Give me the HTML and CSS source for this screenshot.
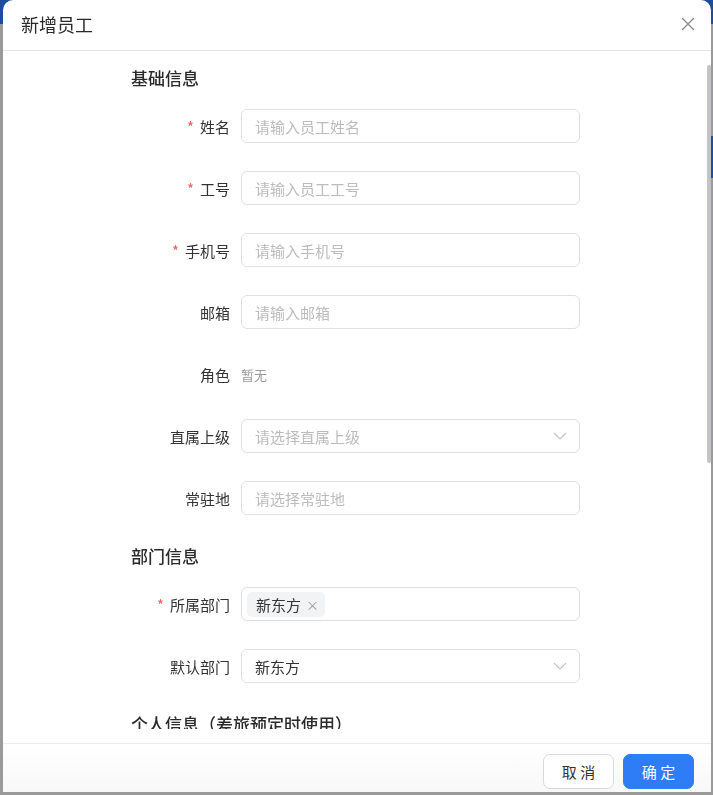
FILE: index.html
```html
<!DOCTYPE html>
<html lang="zh-CN">
<head>
    <meta charset="UTF-8">
    <title>新增员工</title>
    <meta name="viewport" content="width=device-width, initial-scale=1.0">
    <link rel="stylesheet" href="styles.css">
</head>
<body>
    <div class="page">
        <div class="page-bar"></div>
        <div class="page-tab"></div>
    </div>

    <div class="modal">
        <div class="modal-header">
            <span class="modal-title">新增员工</span>
            <button class="modal-close" aria-label="关闭">
                <svg width="14" height="14" viewBox="0 0 14 14">
                    <path d="M1 1L13 13M13 1L1 13" stroke="#8a8a8a" stroke-width="1.3" fill="none"/>
                </svg>
            </button>
        </div>

        <div class="modal-body">
            <div class="scroll">
                <div class="form">
                    <div class="section-title">基础信息</div>
                    <div class="form-row">
                        <label class="form-label required">姓名</label>
                        <input class="input" placeholder="请输入员工姓名">
                    </div>
                    <div class="form-row">
                        <label class="form-label required">工号</label>
                        <input class="input" placeholder="请输入员工工号">
                    </div>
                    <div class="form-row">
                        <label class="form-label required">手机号</label>
                        <input class="input" placeholder="请输入手机号">
                    </div>
                    <div class="form-row">
                        <label class="form-label">邮箱</label>
                        <input class="input" placeholder="请输入邮箱">
                    </div>
                    <div class="form-row">
                        <label class="form-label">角色</label>
                        <span class="empty-text">暂无</span>
                    </div>
                    <div class="form-row">
                        <label class="form-label">直属上级</label>
                        <div class="input select">
                            <span class="placeholder">请选择直属上级</span>
                            <svg class="arrow" width="14" height="8" viewBox="0 0 14 8">
                                <path d="M1 1L7 7L13 1" stroke="#c0c4cc" stroke-width="1.2" fill="none"/>
                            </svg>
                        </div>
                    </div>
                    <div class="form-row">
                        <label class="form-label">常驻地</label>
                        <input class="input" placeholder="请选择常驻地">
                    </div>

                    <div class="section-title">部门信息</div>
                    <div class="form-row">
                        <label class="form-label required">所属部门</label>
                        <div class="input tags">
                            <span class="tag">新东方<span class="tag-close">×</span></span>
                        </div>
                    </div>
                    <div class="form-row">
                        <label class="form-label">默认部门</label>
                        <div class="input select">
                            <span class="value">新东方</span>
                            <svg class="arrow" width="14" height="8" viewBox="0 0 14 8">
                                <path d="M1 1L7 7L13 1" stroke="#c0c4cc" stroke-width="1.2" fill="none"/>
                            </svg>
                        </div>
                    </div>

                    <div class="section-title">个人信息（差旅预定时使用）</div>
                    <div class="form-row">
                        <label class="form-label">证件类型</label>
                        <input class="input" placeholder="请选择证件类型">
                    </div>
                    <div class="form-row">
                        <label class="form-label">证件号码</label>
                        <input class="input" placeholder="请输入证件号码">
                    </div>
                    <div class="form-row">
                        <label class="form-label">英文姓</label>
                        <input class="input" placeholder="请输入英文姓">
                    </div>
                    <div class="form-row">
                        <label class="form-label">英文名</label>
                        <input class="input" placeholder="请输入英文名">
                    </div>
                    <div class="form-row">
                        <label class="form-label">性别</label>
                        <input class="input" placeholder="请选择性别">
                    </div>
                    <div class="form-row">
                        <label class="form-label">出生日期</label>
                        <input class="input" placeholder="请选择出生日期">
                    </div>
                    <div class="form-row">
                        <label class="form-label">国籍</label>
                        <input class="input" placeholder="请选择国籍">
                    </div>
                </div>
            </div>
            <div class="scroll-thumb"></div>
        </div>

        <div class="modal-footer">
            <button class="btn">取 消</button>
            <button class="btn btn-primary">确 定</button>
        </div>
    </div>
</body>
</html>
```

FILE: styles.css
```css
body {
    margin: 0;
    font-family: "Noto Sans CJK SC", "Noto Sans", sans-serif;
    background: #9a9a9a;
    color: #333;
    height: 795px;
    overflow: hidden;
}
.page {
    height: 795px;
}
.page-bar {
    height: 24px;
    background: #1d4c9c;
}
.page-tab {
    width: 8px;
    height: 42px;
    margin: 112px 0 0 auto;
    background: #1f4e9e;
}

/* modal */
.modal {
    position: fixed;
    top: 0;
    left: 3px;
    width: 708px;
    height: 792px;
    background: #fff;
    border-radius: 10px 10px 0 0;
    display: flex;
    flex-direction: column;
    overflow: hidden;
}
.modal-header {
    height: 51px;
    flex: none;
    display: flex;
    align-items: center;
    justify-content: space-between;
    padding: 0 16px 2px 18px;
    box-sizing: border-box;
    border-bottom: 1px solid #e6e6e6;
}
.modal-title {
    font-size: 18px;
    color: #2a2a2a;
    line-height: 24px;
}
.modal-close {
    border: none;
    background: none;
    padding: 0;
    width: 14px;
    height: 14px;
    cursor: pointer;
    display: flex;
}
.modal-body {
    position: relative;
    flex: 1;
    padding: 14px 0;
    min-height: 0;
}
.scroll {
    height: 664px;
    overflow-y: auto;
    scrollbar-width: none;
}
.scroll::-webkit-scrollbar {
    display: none;
}
/* drawn scrollbar thumb, sits over the right edge of the body */
.scroll-thumb {
    position: absolute;
    top: 14px;
    right: 0;
    width: 4px;
    height: 398px;
    background: #c3c4c8;
    border-radius: 2px;
}
.modal-footer {
    height: 49px;
    flex: none;
    border-top: 1px solid #ebebeb;
    background: linear-gradient(#ffffff, #f8f8f8);
    display: flex;
    justify-content: flex-end;
    align-items: flex-start;
    gap: 9px;
    padding: 10px 17px 0 0;
    box-sizing: border-box;
}

/* form */
.form {
    padding: 0 0 12px 128px;
}
.section-title {
    font-size: 17px;
    font-weight: 500;
    line-height: 25px;
    color: #2a2a2a;
    margin-bottom: 19px;
}
.form-row {
    display: flex;
    align-items: center;
    height: 34px;
    margin-bottom: 28px;
}
.form-label {
    width: 99px;
    margin-right: 11px;
    text-align: right;
    font-size: 15px;
    color: #333;
    flex: none;
}
.form-label.required::before {
    content: "*";
    color: #f0605f;
    margin-right: 6px;
}
.input {
    width: 339px;
    height: 34px;
    box-sizing: border-box;
    border: 1px solid #dcdfe6;
    border-radius: 6px;
    padding: 0 13px;
    font-family: inherit;
    font-size: 15px;
    color: #333;
    background: #fff;
    outline: none;
}
.input::placeholder {
    color: #bcbcbc;
}
.select {
    display: flex;
    align-items: center;
    justify-content: space-between;
    padding-right: 12px;
}
.placeholder {
    color: #bcbcbc;
}
.value {
    color: #333;
}
.tags {
    display: flex;
    align-items: center;
    padding: 0 5px;
}
.tag {
    display: inline-flex;
    align-items: center;
    height: 25px;
    padding: 0 6px 0 9px;
    background: #f2f3f5;
    border-radius: 5px;
    font-size: 15px;
    color: #333;
}
.tag-close {
    font-size: 13px;
    color: #999;
    margin-left: 5px;
}
.empty-text {
    font-size: 13px;
    color: #9a9a9a;
}

/* buttons */
.btn {
    width: 71px;
    height: 35px;
    border-radius: 7px;
    border: 1px solid #d9d9d9;
    background: #fff;
    font-family: inherit;
    font-size: 15px;
    color: #333;
    cursor: pointer;
}
.btn-primary {
    background: #2e7cf6;
    border-color: #2e7cf6;
    color: #fff;
}
```
